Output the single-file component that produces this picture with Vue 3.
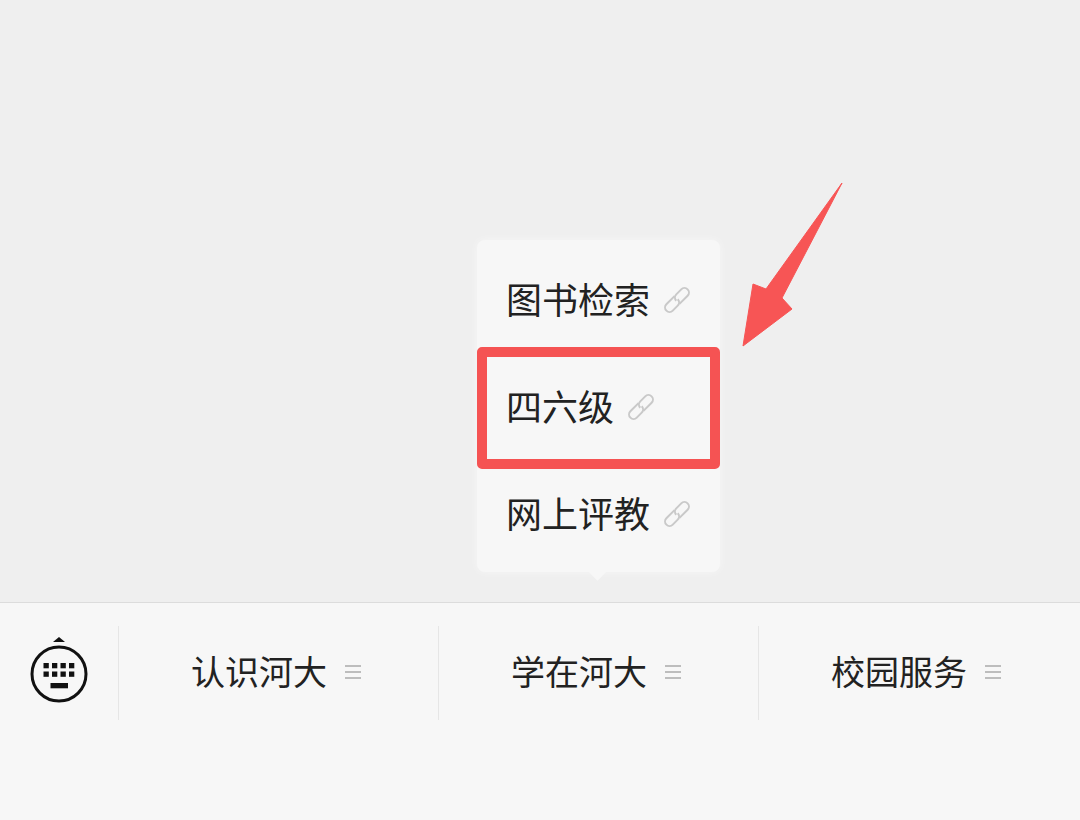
<script setup>
const tabs = [
  { name: '认识河大' },
  { name: '学在河大' },
  { name: '校园服务' }
];

// 当前展开的子菜单
const menu = [
  { name: '图书检索', active: false },
  { name: '四六级', active: true },
  { name: '网上评教', active: false }
];
</script>

<template>
  <div class="page">
    <div class="stage">
      <div class="popup">
        <div v-for="item in menu" :key="item.name" class="popup-item" :class="{ active: item.active }">
          <span>{{ item.name }}</span>
          <svg class="link-icon" width="28" height="28" viewBox="0 0 28 28" fill="none">
            <g transform="rotate(-45 14 14)">
              <path d="M15 9.5H3.5a4.5 4.5 0 0 0 0 9h7a4.5 4.5 0 0 0 4.5-4.5" />
              <path d="M13 18.5h11.5a4.5 4.5 0 0 0 0-9h-7a4.5 4.5 0 0 0-4.5 4.5" />
            </g>
          </svg>
        </div>
        <div class="caret"></div>
      </div>

      <svg class="arrow" width="110" height="170" viewBox="0 0 110 170">
        <polygon points="102,2 42,117 52,128 3,165 13,103 26,108" fill="#f75555" stroke="#f75555" stroke-width="1" stroke-linejoin="round" />
      </svg>
    </div>

    <div class="bar">
      <div class="switch">
        <svg width="60" height="70" viewBox="29 635 60 70">
          <polygon points="59,637 65,642 53,642" fill="#111" />
          <circle cx="59" cy="674" r="27" fill="none" stroke="#111" stroke-width="3" />
          <g fill="#111">
            <rect x="43.5" y="663" width="5.3" height="5.3" />
            <rect x="52" y="663" width="5.3" height="5.3" />
            <rect x="60.5" y="663" width="5.3" height="5.3" />
            <rect x="69" y="663" width="5.3" height="5.3" />
            <rect x="43.5" y="671.5" width="5.3" height="5.3" />
            <rect x="52" y="671.5" width="5.3" height="5.3" />
            <rect x="60.5" y="671.5" width="5.3" height="5.3" />
            <rect x="69" y="671.5" width="5.3" height="5.3" />
            <rect x="50.5" y="683" width="17.5" height="5.3" />
          </g>
        </svg>
      </div>
      <div v-for="tab in tabs" :key="tab.name" class="tab">
        <span>{{ tab.name }}</span>
        <div class="burger"><i></i><i></i><i></i></div>
      </div>
    </div>
  </div>
</template>

<style>
html, body {
  margin: 0;
  background: #f7f7f7;
}
</style>

<style scoped>
.page {
  width: 1080px;
  height: 820px;
  display: flex;
  flex-direction: column;
  overflow: hidden;
  font-family: "Liberation Sans", "Noto Sans CJK SC", sans-serif;
  color: #222;
}

.stage {
  position: relative;
  height: 602px;
  background: #efefef;
}

.popup {
  position: absolute;
  left: 477px;
  top: 240px;
  width: 243px;
  box-sizing: border-box;
  padding: 7px 0 4px;
  background: #f7f7f7;
  border-radius: 8px;
  box-shadow: 0 0 8px rgba(255, 255, 255, 0.5);
}

.popup-item {
  position: relative;
  height: 107px;
  padding-left: 29px;
  display: flex;
  align-items: center;
  gap: 13px;
  font-size: 36px;
}

.popup-item span {
  margin-bottom: 6px;
}

.popup-item.active::after {
  content: "";
  position: absolute;
  left: 0;
  right: 0;
  top: -7px;
  height: 122px;
  box-sizing: border-box;
  border: 10px solid #f55353;
  border-radius: 5px;
}

.link-icon {
  flex: none;
  margin-bottom: 2px;
  stroke: #c9c9c9;
  stroke-width: 2;
  overflow: visible;
}

.caret {
  position: absolute;
  left: 114px;
  bottom: -6px;
  width: 13px;
  height: 13px;
  background: #f7f7f7;
  transform: rotate(45deg);
}

.arrow {
  position: absolute;
  left: 740px;
  top: 181px;
}

.bar {
  flex: 1;
  box-sizing: border-box;
  border-top: 1px solid #dcdcdc;
  padding-top: 23px;
  background: #f7f7f7;
  display: flex;
  align-items: flex-start;
}

.switch {
  width: 118px;
  height: 94px;
  display: flex;
  align-items: center;
  justify-content: center;
}

.switch svg {
  margin-bottom: 6px;
}

.tab {
  width: 320px;
  height: 94px;
  flex: none;
  box-sizing: border-box;
  border-left: 1px solid #e6e6e6;
  padding-right: 5px;
  display: flex;
  align-items: center;
  justify-content: center;
  gap: 18px;
  font-size: 34px;
}

.tab span {
  margin-bottom: 6px;
}

.burger {
  width: 16px;
  margin-bottom: 3px;
  display: flex;
  flex-direction: column;
  gap: 4px;
}

.burger i {
  display: block;
  height: 2px;
  background: #bdbdbd;
}
</style>
